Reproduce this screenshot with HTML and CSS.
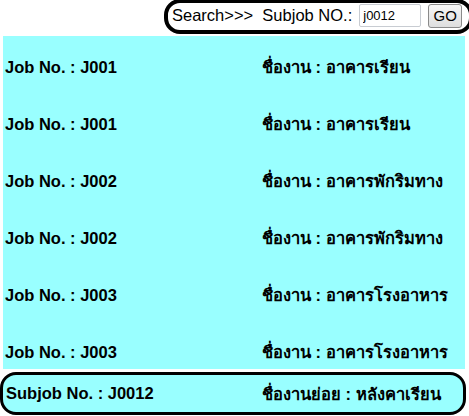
FILE: index.html
```html
<!DOCTYPE html>
<html lang="th">
<head>
    <meta charset="UTF-8">
    <meta name="viewport" content="width=device-width, initial-scale=1.0">
    <title>Subjob Search</title>
    <link rel="stylesheet" href="styles.css">
</head>
<body>
    <div class="search-bar">
        <form class="search-box" id="searchForm">
            <span class="search-label">Search&gt;&gt;&gt;&nbsp; Subjob NO.:</span>
            <input type="text" id="subjobNo" class="search-input" value="j0012">
            <button type="submit" class="search-button">GO</button>
        </form>
    </div>

    <div class="job-list">
        <div class="job-row"><span class="job-no">Job No. : J001</span><span class="job-name">ชื่องาน : อาคารเรียน</span></div>
        <div class="job-row"><span class="job-no">Job No. : J001</span><span class="job-name">ชื่องาน : อาคารเรียน</span></div>
        <div class="job-row"><span class="job-no">Job No. : J002</span><span class="job-name">ชื่องาน : อาคารพักริมทาง</span></div>
        <div class="job-row"><span class="job-no">Job No. : J002</span><span class="job-name">ชื่องาน : อาคารพักริมทาง</span></div>
        <div class="job-row"><span class="job-no">Job No. : J003</span><span class="job-name">ชื่องาน : อาคารโรงอาหาร</span></div>
        <div class="job-row"><span class="job-no">Job No. : J003</span><span class="job-name">ชื่องาน : อาคารโรงอาหาร</span></div>
    </div>

    <!-- subjob that matched the search -->
    <div class="subjob-row">
        <span class="job-no">Subjob No. : J0012</span>
        <span class="job-name">ชื่องานย่อย : หลังคาเรียน</span>
    </div>
</body>
</html>
```

FILE: styles.css
```css
body {
    margin: 0;
    font-family: "Liberation Sans", Arial, sans-serif;
    background-color: #fff;
    color: #000;
    overflow: hidden;
}
.search-bar {
    display: flex;
    justify-content: flex-end;
    height: 36px;
}
.search-box {
    display: flex;
    align-items: center;
    box-sizing: border-box;
    width: 309px;
    height: 35px;
    margin: -1px -4px 0 0;
    padding: 0 0 2px 4px;
    border: 4px solid #000;
    border-radius: 16px;
    background: #fff;
}
.search-label {
    font-size: 16.5px;
    white-space: pre;
}
.search-input {
    box-sizing: border-box;
    width: 62px;
    height: 23px;
    margin-left: 7px;
    padding: 0 3px;
    border: 1px solid #c8ccd2;
    border-radius: 2px;
    font-family: "Liberation Sans", Arial, sans-serif;
    font-size: 13px;
}
.search-button {
    box-sizing: border-box;
    width: 34px;
    height: 24px;
    margin-left: 7px;
    padding: 0;
    border: 1px solid #8a8a8a;
    border-radius: 3px;
    background: linear-gradient(#f6f6f6, #dedede);
    font-family: "Liberation Sans", Arial, sans-serif;
    font-size: 15px;
}
.job-list {
    width: 462px;
    margin-left: 3px;
    padding: 21px 0 7px;
    background-color: #99ffff;
}
.job-row {
    display: grid;
    grid-template-columns: 259px 1fr;
    line-height: 20px;
    font-size: 16.5px;
    font-weight: bold;
    margin-bottom: 37px;
}
.job-row:last-child {
    margin-bottom: 0;
}
.job-row .job-no {
    padding-left: 2px;
}
.subjob-row {
    display: grid;
    grid-template-columns: 256px 1fr;
    align-items: center;
    box-sizing: border-box;
    width: 466px;
    height: 43px;
    margin-top: 3px;
    padding: 0 0 0 3px;
    border: 3px solid #000;
    border-radius: 16px;
    background-color: #99ffff;
    font-size: 16.5px;
    font-weight: bold;
}
```
